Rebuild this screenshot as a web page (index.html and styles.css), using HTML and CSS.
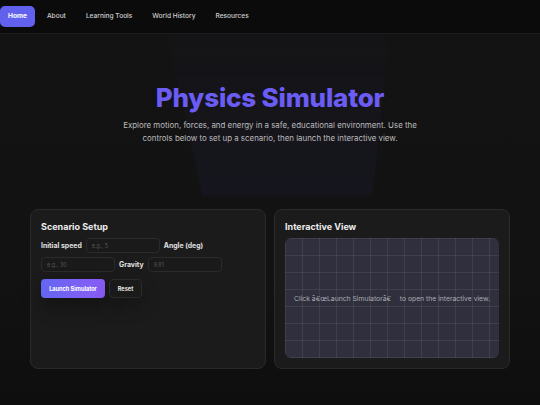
FILE: index.html
```html
<!DOCTYPE html>
<html lang="en">
<head>
<meta charset="utf-8">
<title>Physics Simulator</title>
<link rel="stylesheet" href="styles.css">
</head>
<body>
<nav class="nav">
  <a class="nav-link active" href="#">Home</a>
  <a class="nav-link" href="#">About</a>
  <a class="nav-link" href="#">Learning Tools</a>
  <a class="nav-link" href="#">World History</a>
  <a class="nav-link" href="#">Resources</a>
</nav>
<header class="hero">
  <div class="glow"></div>
  <h1 class="hero-title">Physics Simulator</h1>
  <p class="hero-sub">Explore motion, forces, and energy in a safe, educational environment. Use the<br>controls below to set up a scenario, then launch the interactive view.</p>
</header>
<main class="panels">
  <section class="card">
    <h2 class="card-title">Scenario Setup</h2>
    <div class="fields">
      <label class="field-label">Initial speed</label>
      <input class="field-input" placeholder="e.g., 5">
      <label class="field-label">Angle (deg)</label>
      <input class="field-input" placeholder="e.g., 30">
      <label class="field-label">Gravity</label>
      <input class="field-input" placeholder="9.81">
    </div>
    <div class="actions">
      <button class="btn btn-primary">Launch Simulator</button>
      <button class="btn btn-secondary">Reset</button>
    </div>
  </section>
  <section class="card">
    <h2 class="card-title">Interactive View</h2>
    <div class="canvas">
      <p class="canvas-msg">Click â€œLaunch Simulatorâ€&ensp;&ensp; to open the interactive view.</p>
    </div>
  </section>
</main>
</body>
</html>
```

FILE: styles.css
```css
* { box-sizing: border-box; }
html, body { margin: 0; padding: 0; }
body {
  font-family: Inter, "Noto Sans", "Liberation Sans", sans-serif;
  background: linear-gradient(#131313, #121212 70%, #0e0e0e);
  color: #e6e6e6;
  min-height: 405px;
}
.nav {
  display: flex;
  align-items: center;
  gap: 4px;
  height: 34px;
  padding: 0;
  background: #0b0b0b;
  border-bottom: 1px solid #1c1c1c;
}
.nav-link {
  display: block;
  padding: 0 8px;
  height: 21px;
  line-height: 21px;
  font-size: 6.6px;
  font-weight: 500;
  color: #cfcfcf;
  text-decoration: none;
  border-radius: 5px;
}
.nav-link.active {
  background: #6161ee;
  color: #fff;
  font-weight: 700;
}
.hero {
  position: relative;
  text-align: center;
  padding: 48px 20px 64px;
  overflow: hidden;
}
.glow {
  position: absolute;
  left: 167px;
  top: 0;
  width: 223px;
  height: 162px;
  clip-path: polygon(0 0, 100% 0, 92% 100%, 16% 100%);
  background: linear-gradient(180deg, rgba(40, 38, 70, 0.08), rgba(34, 34, 66, 0.26));
  filter: blur(2px);
}
.hero-title {
  position: relative;
  margin: 0;
  font-size: 26px;
  line-height: 31px;
  font-weight: 800;
  color: #6b5cf4;
  letter-spacing: -0.2px;
}
.hero-sub {
  position: relative;
  margin: 6px auto 0;
  font-size: 7.9px;
  line-height: 13px;
  color: #bdbdbd;
}
.panels {
  display: grid;
  grid-template-columns: 1fr 1fr;
  gap: 8px;
  width: 480px;
  margin: 0 auto;
}
.card {
  background: #1b1b1b;
  border: 1px solid #2a2a2a;
  border-radius: 8px;
  padding: 11px 10px 10px;
}
.card-title {
  margin: 0 0 6px;
  font-size: 9px;
  line-height: 11px;
  font-weight: 700;
  color: #ececec;
}
.fields {
  display: flex;
  flex-wrap: wrap;
  align-items: center;
  gap: 4px;
}
.field-label {
  font-size: 6.9px;
  font-weight: 700;
  color: #e2e2e2;
}
.field-input {
  width: 74px;
  height: 15px;
  padding: 0 5px;
  background: #1a1a1a;
  border: 1px solid #2b2b2b;
  border-radius: 4px;
  font-family: inherit;
  font-size: 5.5px;
  color: #ddd;
  outline: none;
}
.field-input::placeholder { color: #555; }
.actions {
  display: flex;
  gap: 4px;
  margin-top: 7px;
}
.btn {
  height: 19px;
  padding: 0 8px;
  border-radius: 4px;
  font-family: inherit;
  font-size: 5.6px;
  font-weight: 700;
  color: #fff;
  white-space: nowrap;
  cursor: pointer;
}
.btn-primary {
  width: 64px;
  padding: 0;
  border: none;
  background: linear-gradient(90deg, #6366f1, #8b5cf6);
  box-shadow: 0 8px 18px rgba(0, 0, 0, 0.35);
}
.btn-secondary {
  width: 33px;
  padding: 0;
  background: #1a1a1a;
  border: 1px solid #2a2a2a;
  color: #e8e8e8;
  box-shadow: 0 8px 18px rgba(0, 0, 0, 0.25);
}
.canvas {
  height: 120px;
  border-radius: 6px;
  background-color: #2f2f3d;
  background-image:
    linear-gradient(90deg, rgba(255, 255, 255, 0.08) 1px, transparent 1px),
    linear-gradient(180deg, rgba(255, 255, 255, 0.08) 1px, transparent 1px);
  background-size: 17px 17px;
  display: flex;
  align-items: center;
  justify-content: center;
}
.canvas-msg {
  margin: 0;
  font-size: 6.8px;
  color: #ababb3;
  white-space: nowrap;
}
```
